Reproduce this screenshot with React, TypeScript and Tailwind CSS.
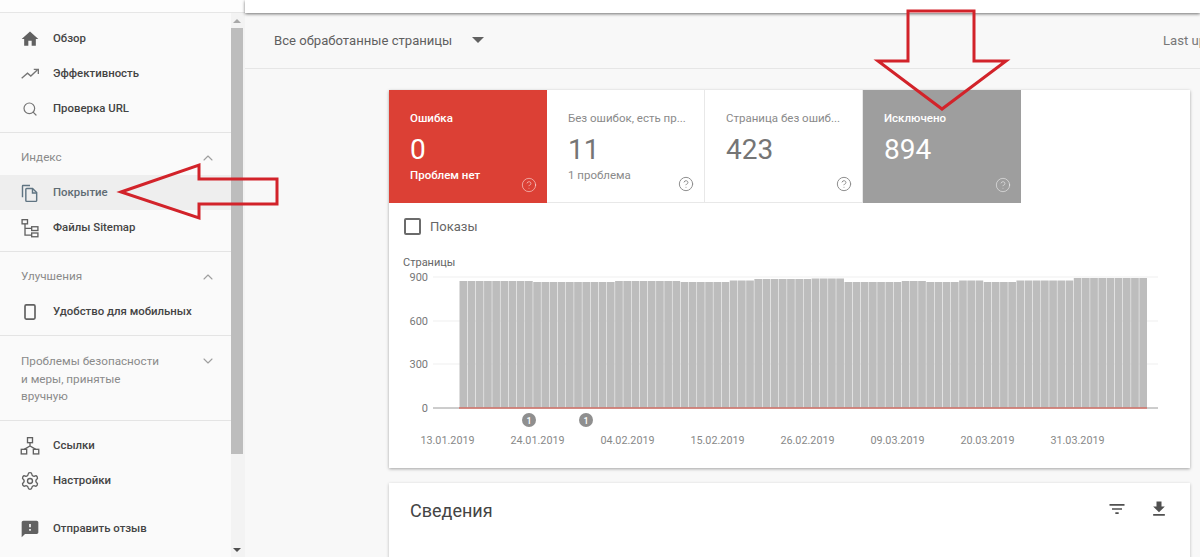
import type { ReactNode } from 'react';
import { ChevronDown, ChevronUp, CircleHelp, Search, Settings } from 'lucide-react';

// Bar runs read off the chart: [bar count, top y inside the svg]
const barRuns: [number, number][] = [
  [9, 31], [10, 32], [8, 31], [6, 32], [3, 30.5], [7, 29], [4, 28.5], [7, 32],
  [3, 31], [4, 32], [3, 30.5], [4, 32], [7, 30.5], [9, 28],
];

const barTops = barRuns.flatMap(([count, top]) => Array.from({ length: count }, () => top));
const barStep = 688 / barTops.length;

const yTicks = [
  { label: '900', y: 27 },
  { label: '600', y: 71 },
  { label: '300', y: 114 },
  { label: '0', y: 158 },
];

const xLabels = ['13.01.2019', '24.01.2019', '04.02.2019', '15.02.2019', '26.02.2019', '09.03.2019', '20.03.2019', '31.03.2019'];

function HomeIcon() {
  return (
    <svg viewBox="0 0 24 24" className="h-5 w-5 fill-[#616161]">
      <path d="M10 20v-6h4v6h5v-8h3L12 3 2 12h3v8z" />
    </svg>
  );
}

function TrendIcon() {
  return (
    <svg viewBox="0 0 24 24" className="h-5 w-5 fill-none stroke-[#757575] stroke-[1.6]">
      <path d="M2 17l7-6 4 3.5L21 7" />
      <path d="M16.5 6.5H22V12" />
    </svg>
  );
}

function CopyIcon() {
  return (
    <svg viewBox="0 0 24 24" className="h-5 w-5 fill-none stroke-[#5f7482] stroke-[1.7]">
      <path d="M5 17V3.5c0-.3.2-.5.5-.5H14" transform="translate(-2 0)" />
      <path d="M8 6.5h7l5 5V21a1 1 0 0 1-1 1H8a1 1 0 0 1-1-1V7.5a1 1 0 0 1 1-1z" />
      <path d="M15 6.5V12h5" />
    </svg>
  );
}

function SitemapIcon() {
  return (
    <svg viewBox="0 0 24 24" className="h-5 w-5 fill-none stroke-[#616161] stroke-[1.6]">
      <rect x="2.5" y="2" width="6.5" height="5" />
      <rect x="14" y="10.5" width="7.5" height="4.5" />
      <rect x="14" y="18" width="7.5" height="4.5" />
      <path d="M6 7v13.5h8M6 12.5h8" />
    </svg>
  );
}

function PhoneIcon() {
  return (
    <svg viewBox="0 0 24 24" className="h-5 w-5 fill-none stroke-[#616161] stroke-2">
      <rect x="6" y="3.5" width="12" height="17" rx="1.5" />
    </svg>
  );
}

function LinksIcon() {
  return (
    <svg viewBox="0 0 24 24" className="h-5 w-5 fill-none stroke-[#616161] stroke-[1.6]">
      <rect x="9" y="2" width="6" height="6" />
      <rect x="1.5" y="16" width="6.5" height="5.5" />
      <rect x="16" y="16" width="6.5" height="5.5" />
      <path d="M12 8v4M5 16l7-4 7 4" />
    </svg>
  );
}

function FeedbackIcon() {
  return (
    <svg viewBox="0 0 24 24" className="h-5 w-5 fill-[#616161]">
      <path d="M20 2H4c-1.1 0-1.99.9-1.99 2L2 22l4-4h14c1.1 0 2-.9 2-2V4c0-1.1-.9-2-2-2zm-7 12h-2v-2h2v2zm0-4h-2V6h2v4z" />
    </svg>
  );
}

function NavRow({ icon, label, active }: { icon: ReactNode; label: string; active?: boolean }) {
  return (
    <div className={`flex h-[35px] items-center gap-[13px] pl-5 ${active ? 'bg-[#eeeeee]' : ''}`}>
      <span className="flex h-5 w-5 items-center justify-center">{icon}</span>
      <span className={`text-[11.4px] font-medium ${active ? 'text-[#5f6b73]' : 'text-[#444444]'}`}>{label}</span>
    </div>
  );
}

function Sidebar() {
  return (
    <aside className="flex h-full w-[245px] shrink-0 flex-col bg-[#fafafa]">
      <div className="h-[13px] shrink-0 border-b border-[#e6e6e6] bg-[#fdfdfd]" />
      <div className="flex min-h-0 flex-1">
        <nav className="w-[231px] shrink-0 overflow-hidden">
          <div className="border-b border-[#e4e4e4] pt-[8px] pb-[6px]">
            <NavRow icon={<HomeIcon />} label="Обзор" />
            <NavRow icon={<TrendIcon />} label="Эффективность" />
            <NavRow icon={<Search className="h-4 w-4 text-[#757575]" strokeWidth={1.8} />} label="Проверка URL" />
          </div>
          <div className="border-b border-[#e4e4e4] pb-[6px]">
            <div className="flex h-[42px] items-center justify-between pt-[8px] pr-[15px] pl-[21px] text-[11.7px] text-[#8a8a8a]">
              Индекс
              <ChevronUp className="h-4 w-4 text-[#9e9e9e]" strokeWidth={1.6} />
            </div>
            <NavRow icon={<CopyIcon />} label="Покрытие" active />
            <NavRow icon={<SitemapIcon />} label="Файлы Sitemap" />
          </div>
          <div className="border-b border-[#e4e4e4] pb-[6px]">
            <div className="flex h-[42px] items-center justify-between pt-[8px] pr-[15px] pl-[21px] text-[11.7px] text-[#8a8a8a]">
              Улучшения
              <ChevronUp className="h-4 w-4 text-[#9e9e9e]" strokeWidth={1.6} />
            </div>
            <NavRow icon={<PhoneIcon />} label="Удобство для мобильных" />
          </div>
          <div className="flex justify-between border-b border-[#e4e4e4] pt-[17px] pr-[15px] pb-[14px] pl-[21px] text-[11.7px] leading-[17.5px] text-[#8a8a8a]">
            <span>
              Проблемы безопасности
              <br />
              и меры, принятые
              <br />
              вручную
            </span>
            <ChevronDown className="h-4 w-4 text-[#9e9e9e]" strokeWidth={1.6} />
          </div>
          <div className="pt-[8px]">
            <NavRow icon={<LinksIcon />} label="Ссылки" />
            <NavRow icon={<Settings className="h-5 w-5 text-[#616161]" strokeWidth={1.6} />} label="Настройки" />
            <div className="h-[13px]" />
            <NavRow icon={<FeedbackIcon />} label="Отправить отзыв" />
          </div>
        </nav>
        {/* scrollbar */}
        <div className="flex w-[14px] flex-col bg-[#f3f3f3] pr-[2px]">
          <div className="flex h-[15px] items-center justify-center">
            <span className="h-0 w-0 border-x-[4px] border-b-[4px] border-x-transparent border-b-[#a8a8a8]" />
          </div>
          <div className="h-[426px] bg-[#bdbdbd]" />
          <div className="flex-1" />
          <div className="flex h-[15px] items-center justify-center">
            <span className="h-0 w-0 border-x-[4px] border-t-[4px] border-x-transparent border-t-[#505050]" />
          </div>
        </div>
      </div>
    </aside>
  );
}

function StatTab({ label, value, note, tone }: { label: string; value: string; note?: string; tone: 'red' | 'white' | 'gray' }) {
  const toneClass =
    tone === 'red'
      ? 'bg-[#dc4035] text-white'
      : tone === 'gray'
        ? 'bg-[#9e9e9e] text-white'
        : 'border-r border-b border-[#e8e8e8] bg-white text-[#8a8a8a]';
  const helpClass = tone === 'white' ? 'text-[#8f8f8f]' : 'text-white/50';
  return (
    <div className={`relative h-[113px] w-[158px] shrink-0 pt-[20px] pl-[21px] ${toneClass}`}>
      <div className={`whitespace-nowrap text-[11.5px] leading-4 ${tone === 'white' ? '' : 'font-medium'}`}>{label}</div>
      <div className={`mt-[7px] text-[28px] leading-[34px] ${tone === 'white' ? 'text-[#757575]' : ''}`}>{value}</div>
      {note && <div className={`text-[11.5px] leading-4 ${tone === 'white' ? '' : 'font-medium'}`}>{note}</div>}
      <CircleHelp className={`absolute right-[10px] bottom-[10px] h-4 w-4 ${helpClass}`} strokeWidth={1.5} />
    </div>
  );
}

function PagesChart() {
  return (
    <svg viewBox="0 0 800 217" className="ml-[1px] block h-[217px] w-[800px] font-[Roboto,sans-serif]">
      <text x="13" y="16" fontSize="11" fill="#666666">Страницы</text>
      {yTicks.map(tick => (
        <g key={tick.label}>
          <text x="38" y={tick.y + 4} fontSize="11" textAnchor="end" fill="#777777">{tick.label}</text>
          <line x1="43" x2="768" y1={tick.y} y2={tick.y} stroke={tick.label === '0' ? '#9a9a9a' : '#efefef'} />
        </g>
      ))}
      {barTops.map((top, i) => (
        <rect key={i} x={69.5 + i * barStep} y={top} width={barStep - 0.5} height={158 - top} fill="#bdbdbd" />
      ))}
      <line x1="69" x2="757" y1="158" y2="158" stroke="#d9483b" />
      {[139, 196].map(x => (
        <g key={x}>
          <circle cx={x} cy="170" r="7" fill="#8f8f8f" />
          <text x={x} y="173.5" fontSize="9" fontWeight="500" textAnchor="middle" fill="#ffffff">1</text>
        </g>
      ))}
      {xLabels.map((label, i) => (
        <text key={label} x={57.5 + i * 90} y="194" fontSize="10.8" textAnchor="middle" fill="#888888">{label}</text>
      ))}
    </svg>
  );
}

export default function App() {
  return (
    <div className="relative flex h-[557px] w-[1200px] overflow-hidden bg-[#f8f8f8] font-[Roboto,sans-serif]">
      <Sidebar />
      <main className="min-w-0 flex-1">
        <div className="h-[13px] bg-white shadow-[0_1px_3px_rgba(0,0,0,0.55)]" />
        <div className="flex h-[56px] items-center justify-between border-b border-[#e6e6e6] pl-[29px] text-[13.1px] text-[#5f5f5f]">
          <div className="flex items-center">
            <span>Все обработанные страницы</span>
            <span className="ml-[20px] h-0 w-0 border-x-[6px] border-t-[6px] border-x-transparent border-t-[#616161]" />
          </div>
          <span className="w-[37px] overflow-hidden whitespace-nowrap text-[#777777]">Last up</span>
        </div>

        <div className="pt-[21px] pr-[10px] pl-[144px]">
          <section className="h-[378px] bg-white shadow-[0_1px_3px_rgba(0,0,0,0.35)]">
            <div className="flex">
              <StatTab tone="red" label="Ошибка" value="0" note="Проблем нет" />
              <StatTab tone="white" label="Без ошибок, есть пр..." value="11" note="1 проблема" />
              <StatTab tone="white" label="Страница без ошиб..." value="423" />
              <StatTab tone="gray" label="Исключено" value="894" />
            </div>
            <div className="flex h-[47px] items-start gap-[9px] pt-[15px] pl-[15px]">
              <span className="h-[17px] w-[17px] rounded-[2px] border-2 border-[#6b6b6b]" />
              <span className="text-[13px] leading-[17px] text-[#666666]">Показы</span>
            </div>
            <PagesChart />
          </section>

          <section className="mt-[15px] flex h-[120px] items-start justify-between bg-white pt-[16px] pr-[21px] pl-[21px] shadow-[0_1px_3px_rgba(0,0,0,0.25)]">
            <h2 className="text-[18px] leading-6 text-[#444444]">Сведения</h2>
            <div className="flex gap-[22px]">
              <svg viewBox="0 0 24 24" className="h-5 w-5 fill-[#505050]">
                <path d="M10 18h4v-2h-4v2zM3 6v2h18V6H3zm3 7h12v-2H6v2z" />
              </svg>
              <svg viewBox="0 0 24 24" className="h-5 w-5 fill-[#505050]">
                <path d="M19 9h-4V3H9v6H5l7 7 7-7zM5 18v2h14v-2H5z" />
              </svg>
            </div>
          </section>
        </div>
      </main>

      {/* red annotation arrows drawn over the screenshot */}
      <svg viewBox="0 0 1200 557" className="pointer-events-none absolute inset-0 h-[557px] w-[1200px] fill-none stroke-[#d2232a] stroke-[3]">
        <path d="M121 192 199 165V179H277V204H199V218Z" />
        <path d="M908 11H974V61H1006L942 109 878 61H908Z" />
      </svg>
    </div>
  );
}
